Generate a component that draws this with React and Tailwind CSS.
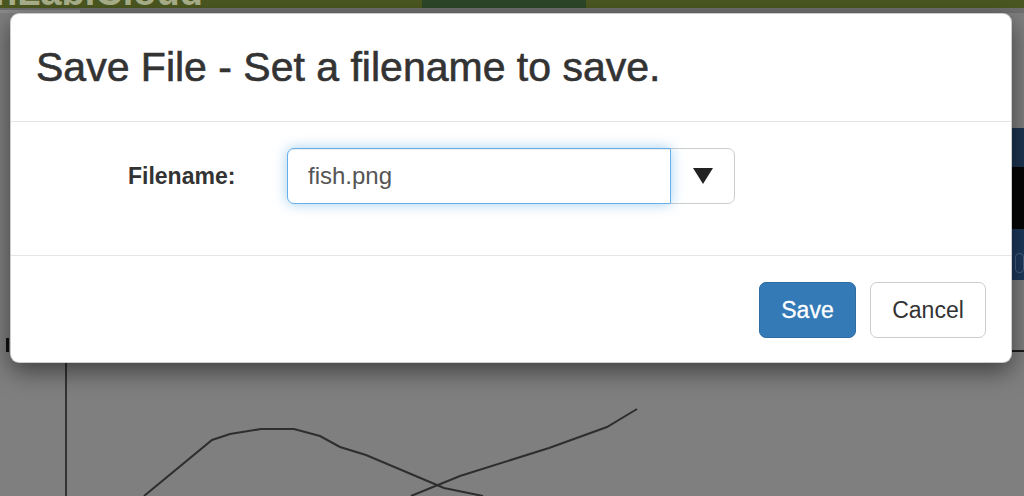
import React from 'react'

function Chart() {
    return (
        <svg viewBox="0 13 1012 483" className="w-full h-full" fill="none">
            {/* tick mark on the left */}
            <rect x="6" y="338" width="3" height="14" fill="#111" />
            {/* chart frame */}
            <line x1="66" y1="351" x2="1012" y2="351" stroke="#1a1a1a" strokeWidth="1.5" />
            <line x1="66" y1="351" x2="66" y2="496" stroke="#1a1a1a" strokeWidth="1.5" />
            <polyline
                points="144,496 212,440 230,434 261,429 294,429 320,436 340,447 366,455 444,488 483,496"
                stroke="#2e2e2e"
                strokeWidth="2"
            />
            <polyline
                points="411,496 460,476 549,448 607,427 637,409"
                stroke="#2e2e2e"
                strokeWidth="2"
            />
        </svg>
    )
}

function Backdrop() {
    return (
        <div className="flex flex-col w-[1024px] h-[496px] bg-[#7f7f7f]">
            {/* top bar */}
            <div className="flex h-[8px] overflow-hidden bg-[#4b5720]">
                <div className="w-[422px] overflow-hidden">
                    <span className="block -mt-[28px] -ml-[6px] text-[38px] leading-[40px] font-bold text-[#a9b08a] whitespace-nowrap">
                        hLab.Cloud
                    </span>
                </div>
                <div className="w-[164px] bg-[#2d4627]" />
                <div className="flex-1" />
            </div>
            <div className="flex h-[5px] bg-[#6f6f6f]">
                <div className="w-[80px] mt-[2px] bg-[#8a8a8a]" />
            </div>

            <div className="flex flex-1">
                <div className="flex-1">
                    <Chart />
                </div>
                {/* sidebar sliver on the right */}
                <div className="flex flex-col w-[12px]">
                    <div className="h-[115px]" />
                    <div className="h-[39px] bg-[#1d3451]" />
                    <div className="h-[62px] bg-[#060606]" />
                    <div className="h-[51px] bg-[#1d395c] pt-[24px] pl-[3px]">
                        <div className="h-[20px] border border-[#4a6381] rounded-sm" />
                    </div>
                    <div className="h-[70px]" />
                    <div className="h-[1.5px] bg-[#1a1a1a]" />
                </div>
            </div>
        </div>
    )
}

function SaveDialog() {
    return (
        <div className="absolute left-[10px] top-[13px] w-[1002px] bg-white border border-black/20 rounded-[9px] shadow-[0_8px_25px_rgba(0,0,0,0.5)] text-[#333]">
            {/* Header */}
            <div className="px-[25px] pt-[25px] pb-[25px] border-b border-[#e5e5e5]">
                <h3 className="text-[41px] leading-[57px] font-medium [-webkit-text-stroke:0.6px_#333]">
                    Save File - Set a filename to save.
                </h3>
            </div>

            {/* Body */}
            <div className="px-[25px] pt-[26px] pb-[26px] border-b border-[#e5e5e5]">
                <div className="flex items-center mb-[25px]">
                    <label className="ml-[92px] w-[159px] text-[23px] font-bold">
                        Filename:
                    </label>
                    <div className="flex">
                        <input
                            defaultValue="fish.png"
                            className="relative z-10 w-[384px] h-[56px] px-[20px] text-[24px] text-[#555] bg-white border border-[#66afe9] rounded-l-[7px] outline-none shadow-[inset_0_1px_1px_rgba(0,0,0,0.075),0_0_13px_rgba(102,175,233,0.6)]"
                        />
                        <button className="-ml-px w-[65px] h-[56px] flex items-center justify-center bg-white border border-[#ccc] rounded-r-[7px]">
                            <svg width="20" height="16" viewBox="0 0 20 16">
                                <polygon points="0,0 20,0 10,16" fill="#222" />
                            </svg>
                        </button>
                    </div>
                </div>
            </div>

            {/* Footer */}
            <div className="flex justify-end gap-[14px] px-[25px] pt-[26px] pb-[24px]">
                <button className="w-[97px] h-[56px] rounded-[7px] bg-[#337ab7] border border-[#2e6da4] text-white text-[23px] [-webkit-text-stroke:0.3px_#fff]">
                    Save
                </button>
                <button className="w-[116px] h-[56px] rounded-[7px] bg-white border border-[#ccc] text-[#333] text-[23px]">
                    Cancel
                </button>
            </div>
        </div>
    )
}

export default function App() {
    return (
        <div className="relative w-[1024px] h-[496px] overflow-hidden font-['Liberation_Sans',Arial,sans-serif]">
            <Backdrop />
            <SaveDialog />
        </div>
    )
}
